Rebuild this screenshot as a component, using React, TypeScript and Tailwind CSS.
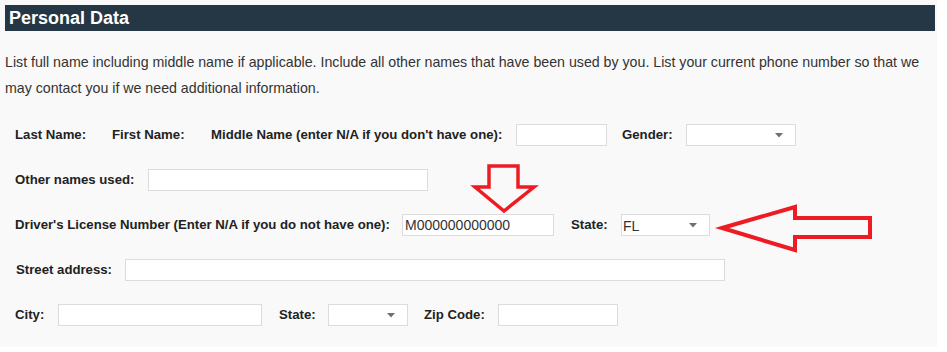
import React from "react";

const font = { fontFamily: '"Liberation Sans", Arial, sans-serif' };

function Label({ children, className = "" }: { children: React.ReactNode; className?: string }) {
  return (
    <span className={`shrink-0 text-[13.2px] font-bold text-[#222] leading-none ${className}`}>{children}</span>
  );
}

function Input({ className = "", value = "" }: { className?: string; value?: string }) {
  return (
    <div
      className={`shrink-0 h-[22px] border border-[#dcdcdc] bg-white flex items-center pl-[2px] pt-[1px] text-[14px] text-[#333] ${className}`}
    >
      {value}
    </div>
  );
}

function Select({ className = "", value = "" }: { className?: string; value?: string }) {
  return (
    <div
      className={`shrink-0 h-[22px] border border-[#dcdcdc] bg-white flex items-center justify-between pl-[1px] pr-[12px] text-[14px] text-[#333] ${className}`}
    >
      <span className="pt-[3px]">{value}</span>
      <svg width="8" height="5" viewBox="0 0 8 5">
        <path d="M0 0 L8 0 L4 4.5 Z" fill="#707070" />
      </svg>
    </div>
  );
}

export default function App() {
  return (
    <div className="bg-white w-[947px] h-[352px]" style={font}>
      <div className="relative w-[937px] h-[347px] bg-[#f9f9f9] pt-[5px]">
        <div className="ml-[5px] w-[930px] h-[26px] bg-[#253744] flex items-center pl-[4px]">
          <span className="text-white font-bold text-[18px] leading-none">Personal Data</span>
        </div>
        <p className="mt-[18px] ml-[5px] text-[14.2px] leading-[26px] text-[#333] w-[925px]">
          List full name including middle name if applicable. Include all other names that have been used by you. List
          your current phone number so that we may contact you if we need additional information.
        </p>

        <div className="mt-[23px] flex items-center pl-[15px] h-[22px]">
          <Label className="w-[97px]">Last Name:</Label>
          <Label className="w-[99px]">First Name:</Label>
          <Label className="w-[305px]">Middle Name (enter N/A if you don't have one):</Label>
          <Input className="w-[91px]" />
          <Label className="ml-[15px] w-[64px]">Gender:</Label>
          <Select className="w-[110px]" />
        </div>

        <div className="mt-[23px] flex items-center pl-[15px] h-[22px]">
          <Label className="w-[133px]">Other names used:</Label>
          <Input className="w-[280px]" />
        </div>

        <div className="mt-[23px] flex items-center pl-[15px] h-[22px]">
          <Label className="w-[387px]">Driver's License Number (Enter N/A if you do not have one):</Label>
          <Input className="w-[152px]" value="M000000000000" />
          <Label className="ml-[17px] w-[50px]">State:</Label>
          <Select className="w-[89px]" value="FL" />
        </div>

        <div className="mt-[23px] flex items-center pl-[16px] h-[22px]">
          <Label className="w-[109px]">Street address:</Label>
          <Input className="w-[600px]" />
        </div>

        <div className="mt-[23px] flex items-center pl-[15px] h-[22px]">
          <Label className="w-[43px]">City:</Label>
          <Input className="w-[204px]" />
          <Label className="ml-[17px] w-[49px]">State:</Label>
          <Select className="w-[80px]" />
          <Label className="ml-[16px] w-[74px]">Zip Code:</Label>
          <Input className="w-[120px]" />
        </div>

        <svg className="absolute left-0 top-0 pointer-events-none" width="937" height="347">
          <path
            d="M489 166 L518 166 L518 187 L534 187 L504 211 L475 187 L489 187 Z"
            fill="none"
            stroke="#ed1c24"
            strokeWidth="3.5"
            strokeLinejoin="miter"
          />
          <path
            d="M722 228 L795 207 L795 218 L870 218 L870 237 L795 237 L795 250 Z"
            fill="none"
            stroke="#ed1c24"
            strokeWidth="4"
            strokeLinejoin="miter"
          />
        </svg>
      </div>
    </div>
  );
}
